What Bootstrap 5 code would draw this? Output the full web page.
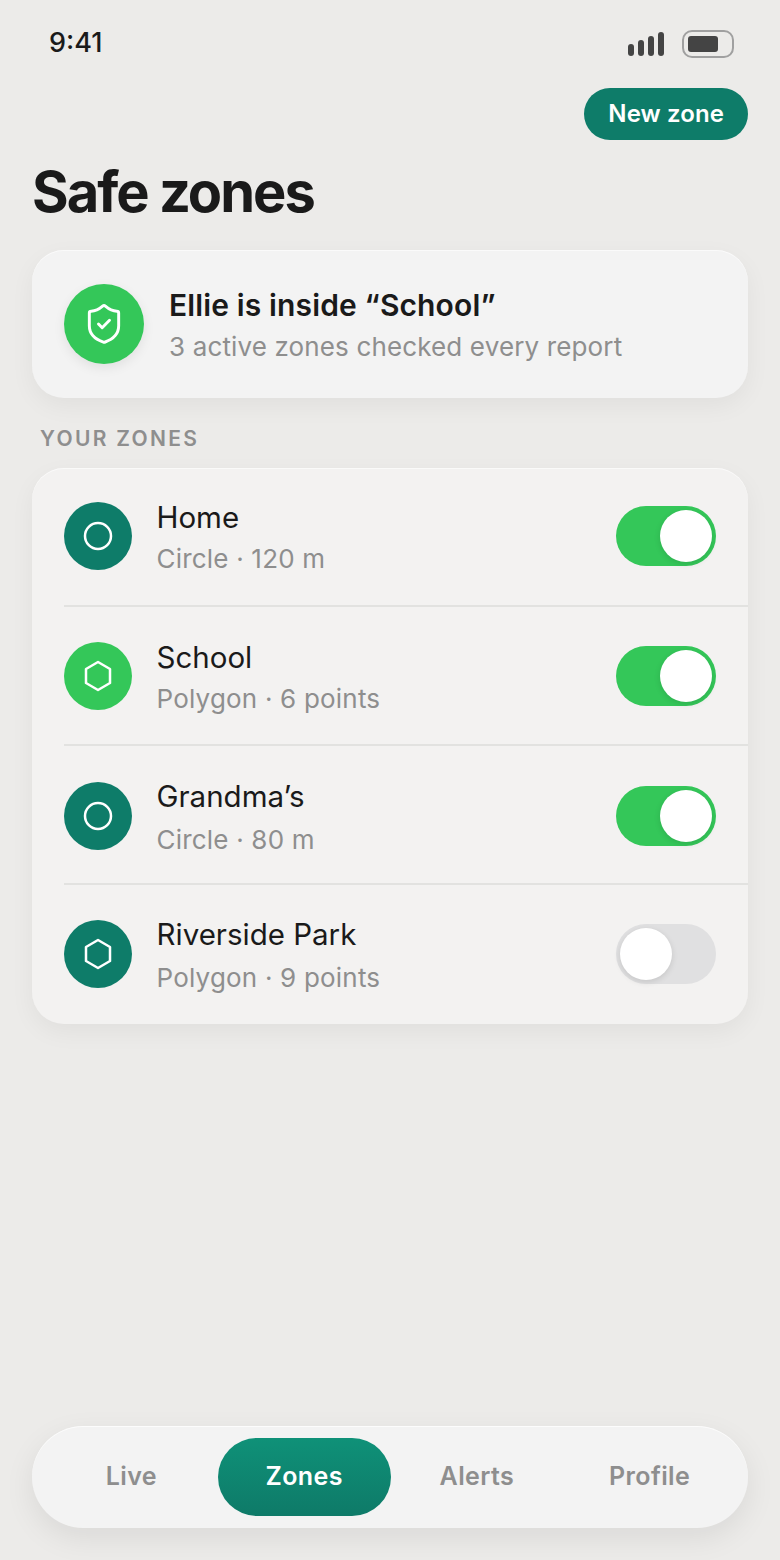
<!DOCTYPE html>
<html lang="en">
<head>
    <meta charset="UTF-8">
    <meta name="viewport" content="width=device-width, initial-scale=1.0">
    <link href="https://cdn.jsdelivr.net/npm/bootstrap@5.3.0/dist/css/bootstrap.min.css" rel="stylesheet">
    <script defer src="https://cdn.jsdelivr.net/npm/bootstrap@5.3.0/dist/js/bootstrap.bundle.min.js"></script>
    <title>Safe zones</title>
    <style>
        body {
            background: #ecebe9;
            font-family: "Inter", "Liberation Sans", sans-serif;
            color: #1a1a1a;
        }
        .phone { width: 780px; height: 1560px; padding: 0 32px 32px; }

        /* status bar */
        .status-row { height: 88px; padding: 0 14px 0 17px; }
        .clock { font-size: 27px; font-weight: 500; line-height: 1; margin-top: -3px; }
        .signal { gap: 4px; height: 24px; margin-right: 2px; }
        .signal span { width: 6px; background: #444; border-radius: 3px; }
        .battery { width: 52px; height: 28px; border: 2px solid #a0a0a0; border-radius: 10px; padding: 4px; }
        .battery span { display: block; width: 30px; height: 100%; background: #444; border-radius: 3px; }

        .new-btn {
            height: 52px; padding: 0 24px; border: 0; border-radius: 26px;
            background: #0e7c69; color: #fff; font-size: 24px; font-weight: 600; line-height: 1; letter-spacing: .1px;
        }
        .new-btn:hover { background: #0e7c69; color: #fff; }
        .page-title { font-size: 56px; font-weight: 700; letter-spacing: -2px; line-height: 68px; margin: 18px 0 24px; }

        .panel {
            background: #f3f3f3; border: 0; border-radius: 32px;
            box-shadow: 0 8px 24px rgba(0, 0, 0, .05), inset 0 1px 0 rgba(255, 255, 255, .6);
        }
        .status-panel { height: 148px; padding: 0 32px; gap: 25px; }
        .shield-disc { width: 80px; height: 80px; background: #34c759; box-shadow: 0 4px 12px rgba(0, 0, 0, .08); }
        .status-text { margin-top: 4px; }
        .status-name { font-size: 30px; font-weight: 600; line-height: 42px; letter-spacing: .13px; }
        .status-sub { font-size: 26px; line-height: 42px; color: #8e8e8e; letter-spacing: .14px; }

        .section-label { font-size: 21px; font-weight: 600; letter-spacing: 2.3px; color: #8e8e8e; line-height: 26px; margin: 28px 0 16px 8px; }

        .zone-list { padding-left: 32px; background: #f3f2f1; }
        .zone-row { height: 139px; padding-right: 32px; gap: 24.5px; border-bottom: 2px solid #e2e2e0; }
        .zone-row:nth-child(1) { padding-bottom: 1px; }
        .zone-row:nth-child(2) { padding-top: 1px; }
        .zone-row:nth-child(3) { padding-top: 3px; }
        .zone-row:nth-child(n+3) .zone-sub { margin-top: 2px; }
        .zone-row:last-child { border-bottom: 0; padding-bottom: 1px; }
        .zone-disc { width: 68px; height: 68px; }
        .disc-teal { background: #0e7c69; }
        .disc-green { background: #34c759; }
        .zone-text { margin-top: 3px; }
        .zone-name { font-size: 29.5px; font-weight: 400; line-height: 41px; }
        .zone-sub { font-size: 26px; line-height: 41px; color: #8e8e8e; letter-spacing: .2px; }

        .toggle { width: 100px; height: 60px; border-radius: 30px; padding: 4px; background: #34c759; justify-content: flex-end; }
        .toggle.is-off { background: #e0e0e1; justify-content: flex-start; }
        .toggle span { width: 52px; height: 52px; border-radius: 50%; background: #fff; box-shadow: 0 2px 6px rgba(0, 0, 0, .12); }

        .tabbar { height: 102px; padding: 12px 12px 12px 13px; border-radius: 51px; box-shadow: 0 10px 30px rgba(0, 0, 0, .08), inset 0 1px 0 rgba(255, 255, 255, .7); }
        .tab-item { flex: 1 1 0; border-radius: 39px; font-size: 25px; font-weight: 600; color: #8e8e8e; letter-spacing: .4px; }
        .tab-item.is-active { background: linear-gradient(180deg, #0f9178, #0e7a68); color: #fff; }
    </style>
</head>
<body>
    <div class="phone d-flex flex-column">
        <!-- status bar -->
        <div class="status-row d-flex align-items-center justify-content-between">
            <div class="clock">9:41</div>
            <div class="d-flex align-items-center gap-3">
                <div class="signal d-flex align-items-end">
                    <span style="height:12px"></span>
                    <span style="height:16px"></span>
                    <span style="height:20px"></span>
                    <span style="height:24px"></span>
                </div>
                <div class="battery"><span></span></div>
            </div>
        </div>

        <div class="d-flex justify-content-end">
            <button type="button" class="btn new-btn">New zone</button>
        </div>
        <h1 class="page-title">Safe zones</h1>

        <!-- current status -->
        <div class="panel status-panel d-flex align-items-center">
            <div class="shield-disc rounded-circle d-flex align-items-center justify-content-center">
                <svg width="44" height="44" viewBox="0 0 24 24" fill="none" stroke="#fff" stroke-width="1.6" stroke-linecap="round" stroke-linejoin="round">
                    <path d="M20 13c0 5-3.5 7.5-7.66 8.95a1 1 0 0 1-.67-.01C7.5 20.5 4 18 4 13V6a1 1 0 0 1 1-1c2 0 4.5-1.2 6.24-2.72a1.17 1.17 0 0 1 1.52 0C14.51 3.81 17 5 19 5a1 1 0 0 1 1 1z"/>
                    <path d="m9 12 2 2 4-4"/>
                </svg>
            </div>
            <div class="status-text">
                <div class="status-name">Ellie is inside “School”</div>
                <div class="status-sub">3 active zones checked every report</div>
            </div>
        </div>

        <div class="section-label">YOUR ZONES</div>

        <!-- zones -->
        <div class="panel zone-list">
            <div class="zone-row d-flex align-items-center">
                <div class="zone-disc disc-teal rounded-circle d-flex align-items-center justify-content-center">
                    <svg width="32" height="32" viewBox="0 0 32 32" fill="none" stroke="#fff" stroke-width="2.5"><circle cx="16" cy="16" r="13"/></svg>
                </div>
                <div class="zone-text flex-grow-1">
                    <div class="zone-name">Home</div>
                    <div class="zone-sub">Circle · 120 m</div>
                </div>
                <div class="toggle d-flex"><span></span></div>
            </div>
            <div class="zone-row d-flex align-items-center">
                <div class="zone-disc disc-green rounded-circle d-flex align-items-center justify-content-center">
                    <svg width="32" height="32" viewBox="0 0 32 32" fill="none" stroke="#fff" stroke-width="2.5" stroke-linejoin="round"><path d="M16 2 28 9v14l-12 7-12-7V9z"/></svg>
                </div>
                <div class="zone-text flex-grow-1">
                    <div class="zone-name">School</div>
                    <div class="zone-sub">Polygon · 6 points</div>
                </div>
                <div class="toggle d-flex"><span></span></div>
            </div>
            <div class="zone-row d-flex align-items-center">
                <div class="zone-disc disc-teal rounded-circle d-flex align-items-center justify-content-center">
                    <svg width="32" height="32" viewBox="0 0 32 32" fill="none" stroke="#fff" stroke-width="2.5"><circle cx="16" cy="16" r="13"/></svg>
                </div>
                <div class="zone-text flex-grow-1">
                    <div class="zone-name">Grandma’s</div>
                    <div class="zone-sub">Circle · 80 m</div>
                </div>
                <div class="toggle d-flex"><span></span></div>
            </div>
            <div class="zone-row d-flex align-items-center">
                <div class="zone-disc disc-teal rounded-circle d-flex align-items-center justify-content-center">
                    <svg width="32" height="32" viewBox="0 0 32 32" fill="none" stroke="#fff" stroke-width="2.5" stroke-linejoin="round"><path d="M16 2 28 9v14l-12 7-12-7V9z"/></svg>
                </div>
                <div class="zone-text flex-grow-1">
                    <div class="zone-name">Riverside Park</div>
                    <div class="zone-sub">Polygon · 9 points</div>
                </div>
                <div class="toggle is-off d-flex"><span></span></div>
            </div>
        </div>

        <!-- bottom tabs -->
        <div class="panel tabbar d-flex mt-auto">
            <div class="tab-item d-flex align-items-center justify-content-center">Live</div>
            <div class="tab-item is-active d-flex align-items-center justify-content-center">Zones</div>
            <div class="tab-item d-flex align-items-center justify-content-center">Alerts</div>
            <div class="tab-item d-flex align-items-center justify-content-center">Profile</div>
        </div>
    </div>
</body>
</html>
